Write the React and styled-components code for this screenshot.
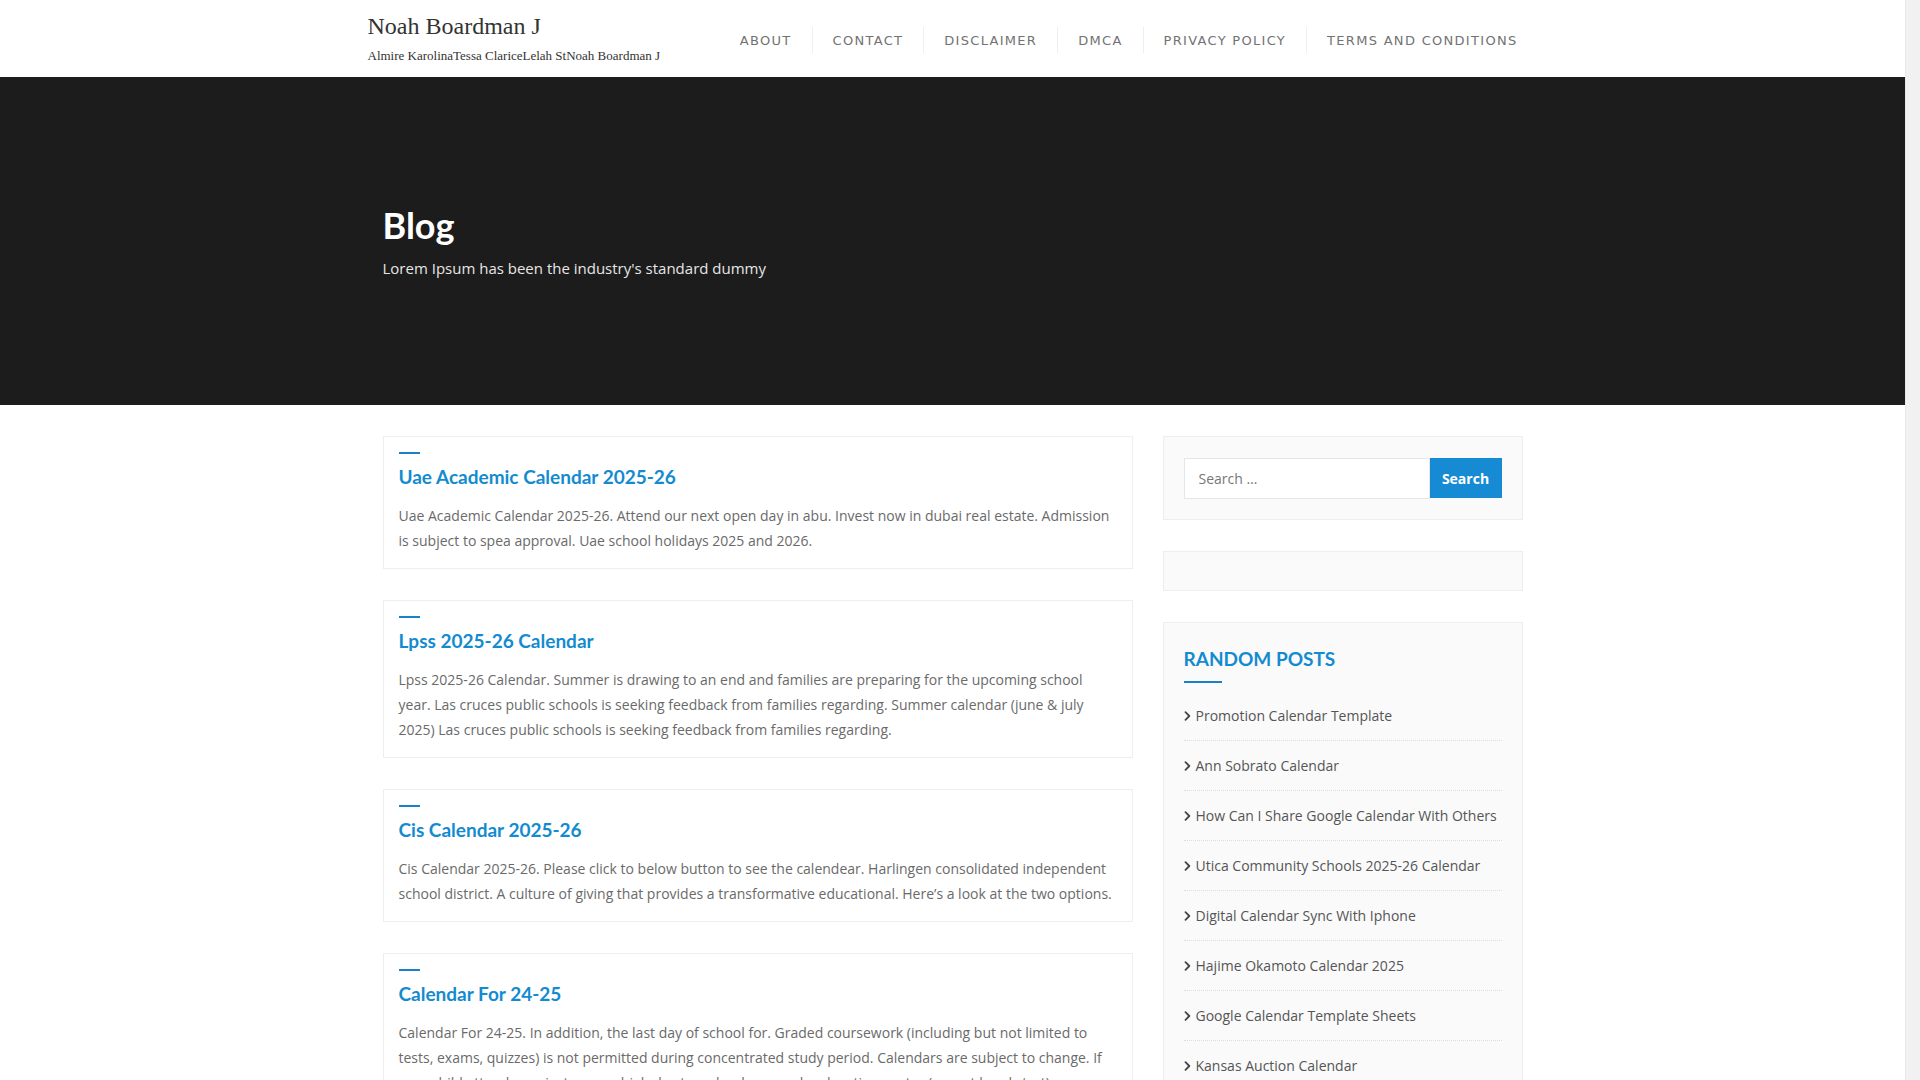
import styled, { createGlobalStyle } from 'styled-components';

const GlobalStyle = createGlobalStyle`
    * { box-sizing: border-box; }
    body {
        margin: 0;
        padding-right: 15px;
        background: #ffffff;
        font-family: "Open Sans", "Liberation Sans", sans-serif;
        color: #666666;
    }
    a { text-decoration: none; }
`

const navLinks = ['About', 'Contact', 'Disclaimer', 'DMCA', 'Privacy Policy', 'Terms and Conditions'];

const posts = [
    {
        title: 'Uae Academic Calendar 2025-26',
        text: 'Uae Academic Calendar 2025-26. Attend our next open day in abu. Invest now in dubai real estate. Admission is subject to spea approval. Uae school holidays 2025 and 2026.'
    },
    {
        title: 'Lpss 2025-26 Calendar',
        text: 'Lpss 2025-26 Calendar. Summer is drawing to an end and families are preparing for the upcoming school year. Las cruces public schools is seeking feedback from families regarding. Summer calendar (june & july 2025) Las cruces public schools is seeking feedback from families regarding.'
    },
    {
        title: 'Cis Calendar 2025-26',
        text: 'Cis Calendar 2025-26. Please click to below button to see the calendear. Harlingen consolidated independent school district. A culture of giving that provides a transformative educational. Here’s a look at the two options.'
    },
    {
        title: 'Calendar For 24-25',
        text: 'Calendar For 24-25. In addition, the last day of school for. Graded coursework (including but not limited to tests, exams, quizzes) is not permitted during concentrated study period. Calendars are subject to change. If your child attends a private, parochial, charter school, our early education center (except head start), you may need to check with them.'
    },
    {
        title: 'Wcpss Calendar 2025-26',
        text: 'Wcpss Calendar 2025-26. The board of education approved the traditional calendar for the upcoming school year. Find important dates, holidays and early release days for all schools in the district.'
    }
];

const randomPosts = [
    'Promotion Calendar Template',
    'Ann Sobrato Calendar',
    'How Can I Share Google Calendar With Others',
    'Utica Community Schools 2025-26 Calendar',
    'Digital Calendar Sync With Iphone',
    'Hajime Okamoto Calendar 2025',
    'Google Calendar Template Sheets',
    'Kansas Auction Calendar',
    'Printable Monthly Calendar 2025',
    'Fiscal Calendar 2025 Pdf'
];

function AngleRight () {
    return (
        <svg width="7" height="10" viewBox="0 0 7 10">
            <path d="M1.5 1.2 L5.3 5 L1.5 8.8" fill="none" stroke="#444" strokeWidth="1.8" strokeLinecap="round" strokeLinejoin="round" />
        </svg>
    )
}

export default function App () {
    return (
        <>
            <GlobalStyle />
            <Header>
                <HeaderInner>
                    <Branding>
                        <SiteTitle href="#">Noah Boardman J</SiteTitle>
                        <Tagline>Almire KarolinaTessa ClariceLelah StNoah Boardman J</Tagline>
                    </Branding>
                    <Nav>
                        {navLinks.map((link, i) =>
                            <NavItem key={link} $first={i === 0}>
                                <a href="#">{link}</a>
                            </NavItem>
                        )}
                    </Nav>
                </HeaderInner>
            </Header>

            <Hero>
                <Container>
                    <HeroTitle>Blog</HeroTitle>
                    <HeroText>Lorem Ipsum has been the industry's standard dummy</HeroText>
                </Container>
            </Hero>

            <Main>
                <Container>
                    <Row>
                        <PostList>
                            {posts.map(post =>
                                <PostCard key={post.title}>
                                    <Accent />
                                    <PostTitle href="#">{post.title}</PostTitle>
                                    <PostText>{post.text}</PostText>
                                </PostCard>
                            )}
                        </PostList>
                        <Sidebar>
                            <Widget>
                                <SearchForm onSubmit={e => e.preventDefault()}>
                                    <SearchInput type="search" placeholder="Search …" />
                                    <SearchButton type="submit">Search</SearchButton>
                                </SearchForm>
                            </Widget>
                            <Widget $empty />
                            <Widget>
                                <WidgetTitle>Random Posts</WidgetTitle>
                                <WidgetRule />
                                <LinkList>
                                    {randomPosts.map(item =>
                                        <LinkItem key={item}>
                                            <AngleRight />
                                            <a href="#">{item}</a>
                                        </LinkItem>
                                    )}
                                </LinkList>
                            </Widget>
                        </Sidebar>
                    </Row>
                </Container>
            </Main>
            <ScrollTrack />
        </>
    )
}

const ScrollTrack = styled.div`
    position: fixed;
    top: 0;
    right: 0;
    width: 15px;
    height: 100vh;
    background: #f1f1f1;
    border-left: 1px solid #e8e8e8;
`
const Header = styled.header`
    background: #ffffff;
    height: 77px;
`
const HeaderInner = styled.div`
    width: 1170px;
    margin: 0 auto;
    display: flex;
    justify-content: space-between;
    align-items: flex-start;
`
const Branding = styled.div`
    padding-top: 12px;
    display: flex;
    flex-direction: column;
`
const SiteTitle = styled.a`
    font-family: "Liberation Serif", "Times New Roman", serif;
    font-size: 24px;
    line-height: 29px;
    color: #333333;
`
const Tagline = styled.p`
    margin: 6px 0 0;
    font-family: "Liberation Serif", "Times New Roman", serif;
    font-size: 13px;
    line-height: 18px;
    color: #333333;
`
const Nav = styled.ul`
    list-style: none;
    margin: 27px 0 0;
    padding: 0;
    display: flex;
`
const NavItem = styled.li`
    border-left: ${p => p.$first ? 'none' : '1px solid #eeeeee'};
    height: 26px;
    display: flex;
    align-items: center;

    a {
        padding: 0 20px;
        font-family: "DejaVu Sans", "Liberation Sans", sans-serif;
        font-size: 13px;
        letter-spacing: 1.3px;
        text-transform: uppercase;
        color: #727272;
    }
`
const Hero = styled.section`
    background: #1c1c1c;
    height: 328px;
    display: flex;
    align-items: center;
`
const Container = styled.div`
    width: 1170px;
    padding: 0 15px;
    margin: 0 auto;
`
const HeroTitle = styled.h1`
    margin: 0;
    font-family: Lato, "Open Sans", sans-serif;
    font-weight: 700;
    font-size: 36px;
    line-height: 44px;
    color: #ffffff;
`
const HeroText = styled.p`
    margin: 10px 0 0;
    font-size: 15px;
    line-height: 22px;
    color: #e6e6e6;
`
const Main = styled.main`
    padding: 31px 0 60px;
`
const Row = styled.div`
    display: grid;
    grid-template-columns: 750px 360px;
    gap: 30px;
    align-items: start;
`
const PostList = styled.div`
    display: flex;
    flex-direction: column;
    gap: 31px;
`
const PostCard = styled.article`
    border: 1px solid #eeeeee;
    padding: 15px;
    background: #ffffff;
`
const Accent = styled.span`
    display: block;
    width: 21px;
    height: 2px;
    background: #1a82c4;
    margin-bottom: 10px;
`
const PostTitle = styled.a`
    display: block;
    font-family: Lato, "Open Sans", sans-serif;
    font-weight: 700;
    font-size: 19px;
    line-height: 25px;
    color: #138bd0;
`
const PostText = styled.p`
    margin: 14px 0 0;
    font-size: 14px;
    line-height: 25px;
    color: #6a6a6a;
`
const Sidebar = styled.aside`
    display: flex;
    flex-direction: column;
    gap: 31px;
`
const Widget = styled.section`
    background: #fafafa;
    border: 1px solid #eeeeee;
    padding: ${p => p.$empty ? '19px 20px' : '21px 20px 20px'};
`
const SearchForm = styled.form`
    display: flex;
    align-items: flex-start;
`
const SearchInput = styled.input`
    flex: 1;
    min-width: 0;
    height: 41px;
    border: 1px solid #e6e6e6;
    background: #ffffff;
    padding: 0 14px;
    font-family: "Open Sans", sans-serif;
    font-size: 14px;
    color: #555555;
    outline: none;

    &::placeholder {
        color: #777777;
    }
`
const SearchButton = styled.button`
    width: 72px;
    height: 40px;
    border: none;
    background: #168bd4;
    color: #ffffff;
    font-family: "Open Sans", sans-serif;
    font-weight: 700;
    font-size: 14px;
    cursor: pointer;
`
const WidgetTitle = styled.h3`
    margin: 0;
    font-family: Lato, "Open Sans", sans-serif;
    font-weight: 700;
    font-size: 19px;
    line-height: 30px;
    text-transform: uppercase;
    color: #138bd0;
`
const WidgetRule = styled.span`
    display: block;
    width: 38px;
    height: 2px;
    margin-top: 7px;
    background: #1a82c4;
`
const LinkList = styled.ul`
    list-style: none;
    margin: 8px 0 0;
    padding: 0;
`
const LinkItem = styled.li`
    height: 50px;
    display: flex;
    align-items: center;
    gap: 5px;
    border-bottom: 1px dotted #dddddd;

    &:last-child {
        border-bottom: none;
    }

    a {
        font-size: 14px;
        color: #555555;
    }
`
